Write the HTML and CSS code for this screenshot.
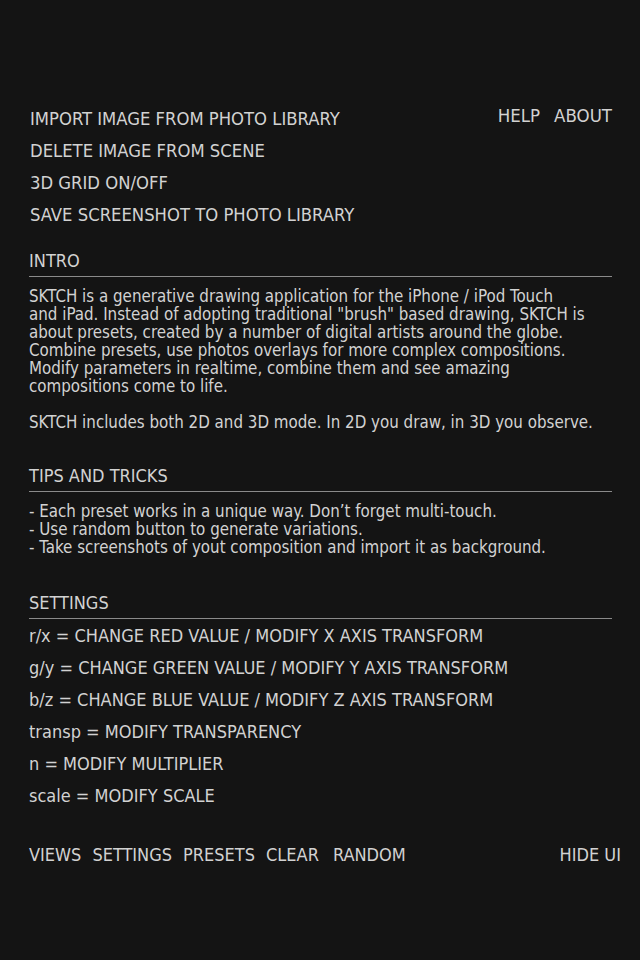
FILE: index.html
```html
<!DOCTYPE html>
<html>
<head>
<meta charset="utf-8">
<link rel="stylesheet" href="styles.css">
</head>
<body>
<div class="page">
  <div class="top">
    <ul class="menu">
      <li>IMPORT IMAGE FROM PHOTO LIBRARY</li>
      <li>DELETE IMAGE FROM SCENE</li>
      <li>3D GRID ON/OFF</li>
      <li>SAVE SCREENSHOT TO PHOTO LIBRARY</li>
    </ul>
    <div class="links">
      <span>HELP</span>
      <span>ABOUT</span>
    </div>
  </div>

  <section class="section intro">
    <h2 class="heading">INTRO</h2>
    <p class="para">SKTCH is a generative drawing application for the iPhone / iPod Touch<br>and iPad. Instead of adopting traditional "brush" based drawing, SKTCH is<br>about presets, created by a number of digital artists around the globe.<br>Combine presets, use photos overlays for more complex compositions.<br>Modify parameters in realtime, combine them and see amazing<br>compositions come to life.</p>
    <p class="para">SKTCH includes both 2D and 3D mode. In 2D you draw, in 3D you observe.</p>
  </section>

  <section class="section tips">
    <h2 class="heading">TIPS AND TRICKS</h2>
    <p class="para">- Each preset works in a unique way. Don’t forget multi-touch.<br>- Use random button to generate variations.<br>- Take screenshots of yout composition and import it as background.</p>
  </section>

  <section class="section settings">
    <h2 class="heading">SETTINGS</h2>
    <ul class="menu">
      <li>r/x = CHANGE RED VALUE / MODIFY X AXIS TRANSFORM</li>
      <li>g/y = CHANGE GREEN VALUE / MODIFY Y AXIS TRANSFORM</li>
      <li>b/z = CHANGE BLUE VALUE / MODIFY Z AXIS TRANSFORM</li>
      <li>transp = MODIFY TRANSPARENCY</li>
      <li>n = MODIFY MULTIPLIER</li>
      <li>scale = MODIFY SCALE</li>
    </ul>
  </section>

  <nav class="bottom">
    <div class="tabs">
      <span>VIEWS</span>
      <span>SETTINGS</span>
      <span>PRESETS</span>
      <span>CLEAR</span>
      <span class="random">RANDOM</span>
    </div>
    <span>HIDE UI</span>
  </nav>
</div>
</body>
</html>
```
FILE: styles.css
```css
html, body {
  margin: 0;
  padding: 0;
  background: #141414;
}
body {
  color: #d2d2d2;
  font-family: "DejaVu Sans Condensed", "DejaVu Sans", sans-serif;
  font-stretch: condensed;
  width: 640px;
  height: 960px;
  overflow: hidden;
}
.page {
  padding: 103px 28px 0 29px;
}
.top {
  display: flex;
  justify-content: space-between;
  align-items: flex-start;
}
.menu {
  list-style: none;
  margin: 0;
  padding: 0;
  font-size: 18px;
  line-height: 32px;
}
.top .menu {
  padding-left: 1px;
  font-size: 18.3px;
}
.links {
  display: flex;
  gap: 14px;
  font-size: 18.5px;
  line-height: 32px;
  margin-top: -3px;
}
.heading {
  font-size: 18px;
  font-weight: normal;
  margin: 0;
  line-height: 22px;
  padding-bottom: 4px;
  border-bottom: 1px solid #8a8a8a;
}
.intro {
  margin-top: 19px;
}
.para {
  margin: 10px 0 0 0;
  font-size: 16.8px;
  line-height: 18px;
  white-space: nowrap;
}
.intro .para + .para {
  margin-top: 18px;
}
.tips {
  margin-top: 34px;
}
.settings {
  margin-top: 36px;
}
.settings .menu {
  margin-top: 1px;
}
.bottom {
  display: flex;
  justify-content: space-between;
  font-size: 18px;
  line-height: 22px;
  margin-top: 32px;
  margin-right: -9px;
}
.tabs {
  display: flex;
  gap: 11px;
}
.tabs .random {
  margin-left: 3px;
}
```
